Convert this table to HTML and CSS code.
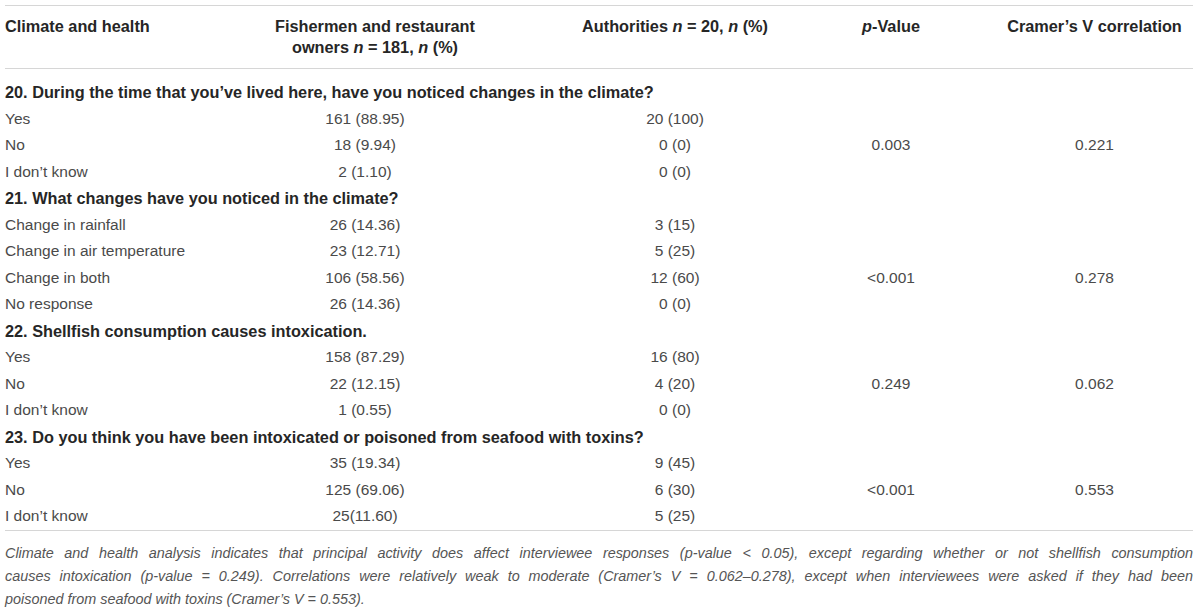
FILE: index.html
```html
<!DOCTYPE html>
<html lang="en">
<head>
    <meta charset="UTF-8">
    <title>Climate and health</title>
    <link rel="stylesheet" href="styles.css">
</head>
<body>
    <div class="wrap">
        <table class="results">
            <colgroup>
                <col class="c-label">
                <col class="c-fish">
                <col class="c-auth">
                <col class="c-p">
                <col class="c-v">
            </colgroup>
            <thead>
                <tr>
                    <th class="left">Climate and health</th>
                    <th class="shift">Fishermen and restaurant<br>owners <i>n</i> = 181, <i>n</i> (%)</th>
                    <th>Authorities <i>n</i> = 20, <i>n</i> (%)</th>
                    <th><i>p</i>-Value</th>
                    <th>Cramer’s V correlation</th>
                </tr>
            </thead>
            <tbody>
                <tr class="spacer"><td colspan="5"></td></tr>
                <tr class="question"><td colspan="5">20. During the time that you’ve lived here, have you noticed changes in the climate?</td></tr>
                <tr><td>Yes</td><td>161 (88.95)</td><td>20 (100)</td><td></td><td></td></tr>
                <tr><td>No</td><td>18 (9.94)</td><td>0 (0)</td><td>0.003</td><td>0.221</td></tr>
                <tr><td>I don’t know</td><td>2 (1.10)</td><td>0 (0)</td><td></td><td></td></tr>

                <tr class="question"><td colspan="5">21. What changes have you noticed in the climate?</td></tr>
                <tr><td>Change in rainfall</td><td>26 (14.36)</td><td>3 (15)</td><td></td><td></td></tr>
                <tr><td>Change in air temperature</td><td>23 (12.71)</td><td>5 (25)</td><td></td><td></td></tr>
                <tr><td>Change in both</td><td>106 (58.56)</td><td>12 (60)</td><td>&lt;0.001</td><td>0.278</td></tr>
                <tr><td>No response</td><td>26 (14.36)</td><td>0 (0)</td><td></td><td></td></tr>

                <tr class="question"><td colspan="5">22. Shellfish consumption causes intoxication.</td></tr>
                <tr><td>Yes</td><td>158 (87.29)</td><td>16 (80)</td><td></td><td></td></tr>
                <tr><td>No</td><td>22 (12.15)</td><td>4 (20)</td><td>0.249</td><td>0.062</td></tr>
                <tr><td>I don’t know</td><td>1 (0.55)</td><td>0 (0)</td><td></td><td></td></tr>

                <tr class="question"><td colspan="5">23. Do you think you have been intoxicated or poisoned from seafood with toxins?</td></tr>
                <tr><td>Yes</td><td>35 (19.34)</td><td>9 (45)</td><td></td><td></td></tr>
                <tr><td>No</td><td>125 (69.06)</td><td>6 (30)</td><td>&lt;0.001</td><td>0.553</td></tr>
                <tr><td>I don’t know</td><td>25(11.60)</td><td>5 (25)</td><td></td><td></td></tr>
            </tbody>
        </table>
        <p class="note">
            <span class="line full">Climate and health analysis indicates that principal activity does affect interviewee responses (p-value &lt; 0.05), except regarding whether or not shellfish consumption</span>
            <span class="line full">causes intoxication (p-value = 0.249). Correlations were relatively weak to moderate (Cramer’s V = 0.062–0.278), except when interviewees were asked if they had been</span>
            <span class="line">poisoned from seafood with toxins (Cramer’s V = 0.553).</span>
        </p>
    </div>
</body>
</html>
```

FILE: styles.css
```css
body {
    margin: 0;
    padding: 0;
    background-color: #ffffff;
    font-family: "Liberation Sans", Arial, sans-serif;
    color: #4a4a4a;
}
.wrap {
    padding: 5px 7px 0 5px;
}
.results {
    width: 1188px;
    table-layout: fixed;
    border-collapse: collapse;
    border-top: 1px solid #d6d6d6;
    border-bottom: 1px solid #d6d6d6;
    font-size: 15.5px;
}
.c-label { width: 161px; }
.c-fish { width: 398px; }
.c-auth { width: 222px; }
.c-p { width: 210px; }
.c-v { width: 197px; }

thead th {
    padding: 10px 0;
    line-height: 21px;
    font-size: 16.3px;
    font-weight: bold;
    color: #262626;
    text-align: center;
    vertical-align: top;
    white-space: nowrap;
    border-bottom: 1px solid #d6d6d6;
}
thead th.left {
    text-align: left;
}
thead th.shift {
    padding-left: 20px;
}
tbody td {
    padding: 0;
    height: 26.5px;
    line-height: 26.5px;
    text-align: center;
    white-space: nowrap;
    overflow: visible;
}
tbody td:first-child {
    text-align: left;
}
tbody tr.spacer td {
    height: 10px;
    line-height: 10px;
}
tbody tr.question td {
    font-size: 16.3px;
    font-weight: bold;
    color: #262626;
}
.note {
    margin: 11px 0 0 0;
    font-size: 14.4px;
    font-style: italic;
    line-height: 23px;
    color: #555;
}
.note .line {
    display: block;
    white-space: nowrap;
}
.note .line.full {
    text-align: justify;
    text-align-last: justify;
}
```
